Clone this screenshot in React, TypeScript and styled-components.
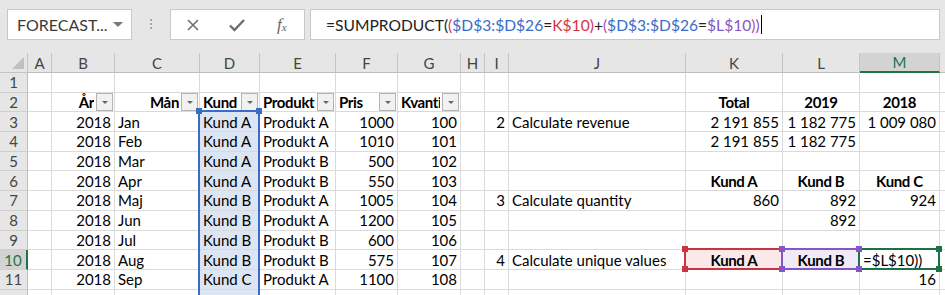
import React from 'react';
import styled, { createGlobalStyle, css } from 'styled-components';

type Ref = 'blue' | 'red' | 'purple' | 'green';
type Align = 'left' | 'right' | 'center';
type Corner = 'tl' | 'tr' | 'bl' | 'br';

type CellSpec = {
  v?: string,
  a?: Align,
  b?: boolean,
  filter?: boolean,
  hl?: Ref,
  sides?: string,
  handles?: Corner[],
}

const refColors: Record<Ref, { line: string, fill: string }> = {
  blue: { line: '#3a6cc6', fill: '#dbe5f4' },
  red: { line: '#c9353d', fill: '#fbe9ea' },
  purple: { line: '#8657c4', fill: '#efeaf7' },
  green: { line: '#1e7145', fill: '#ffffff' },
};

// last column is only a sliver at the right edge, so it has no letter
const COLS = ['A', 'B', 'C', 'D', 'E', 'F', 'G', 'H', 'I', 'J', 'K', 'L', 'M', ''];
const WIDTHS = [24, 63, 85, 60, 76, 62, 63, 24, 24, 177, 97, 77, 80, 60];
const VISIBLE_ROWS = 11;

const sales = [
  ['2018', 'Jan', 'Kund A', 'Produkt A', '1000', '100'],
  ['2018', 'Feb', 'Kund A', 'Produkt A', '1010', '101'],
  ['2018', 'Mar', 'Kund A', 'Produkt B', '500', '102'],
  ['2018', 'Apr', 'Kund A', 'Produkt B', '550', '103'],
  ['2018', 'Maj', 'Kund B', 'Produkt A', '1005', '104'],
  ['2018', 'Jun', 'Kund B', 'Produkt A', '1200', '105'],
  ['2018', 'Jul', 'Kund B', 'Produkt B', '600', '106'],
  ['2018', 'Aug', 'Kund B', 'Produkt B', '575', '107'],
  ['2018', 'Sep', 'Kund C', 'Produkt A', '1100', '108'],
];

const calc: Record<number, Record<string, CellSpec>> = {
  2: {
    K: { v: 'Total', a: 'center', b: true },
    L: { v: '2019', a: 'center', b: true },
    M: { v: '2018', a: 'center', b: true },
  },
  3: {
    I: { v: '2', a: 'right' },
    J: { v: 'Calculate revenue' },
    K: { v: '2 191 855', a: 'right' },
    L: { v: '1 182 775', a: 'right' },
    M: { v: '1 009 080', a: 'right' },
  },
  4: {
    K: { v: '2 191 855', a: 'right' },
    L: { v: '1 182 775', a: 'right' },
  },
  6: {
    K: { v: 'Kund A', a: 'center', b: true },
    L: { v: 'Kund B', a: 'center', b: true },
    M: { v: 'Kund C', a: 'center', b: true },
  },
  7: {
    I: { v: '3', a: 'right' },
    J: { v: 'Calculate quantity' },
    K: { v: '860', a: 'right' },
    L: { v: '892', a: 'right' },
    M: { v: '924', a: 'right' },
  },
  8: {
    L: { v: '892', a: 'right' },
  },
  10: {
    I: { v: '4', a: 'right' },
    J: { v: 'Calculate unique values' },
    K: { v: 'Kund A', a: 'center', b: true, hl: 'red', sides: 'tlbr', handles: ['tl', 'tr', 'bl', 'br'] },
    L: { v: 'Kund B', a: 'center', b: true, hl: 'purple', sides: 'tlbr', handles: ['tl', 'tr', 'bl', 'br'] },
    M: { v: '=$L$10))', hl: 'green', sides: 'tlbr', handles: ['tr', 'br'] },
  },
  11: {
    M: { v: '16', a: 'right' },
  },
};

const headers = ['År', 'Mån', 'Kund', 'Produkt', 'Pris', 'Kvanti'];
const headerAlign: Align[] = ['right', 'right', 'left', 'left', 'left', 'left'];
const numeric = [true, false, false, false, true, true];

function specFor(row: number, col: string): CellSpec {
  const i = COLS.indexOf(col) - 1;
  let spec: CellSpec = {};
  if (i >= 0 && i < 6) {
    if (row === 2) spec = { v: headers[i], a: headerAlign[i], b: true, filter: true };
    if (row >= 3 && row <= 11) spec = { v: sales[row - 3][i], a: numeric[i] ? 'right' : 'left' };
  }
  if (calc[row] && calc[row][col]) spec = calc[row][col];
  if (col === 'D' && row >= 3) {
    spec = { ...spec, hl: 'blue', sides: row === 3 ? 'tlr' : 'lr', handles: row === 3 ? ['tl', 'tr'] : [] };
  }
  return spec;
}

export default function App(): React.FunctionComponentElement<JSX.Element> {
  // one extra row peeks in under the bottom edge
  const rows = Array.from({ length: VISIBLE_ROWS + 1 }, (_, i) => i + 1);

  return (
    <Wrapper>
      <GlobalStyle />
      <FormulaBar>
        <NameBox>
          <span>{'FORECAST...'}</span>
          <Caret />
        </NameBox>
        <Grip><i /><i /><i /></Grip>
        <FxBox>
          <FxSlot>
            <svg width='14' height='14' viewBox='0 0 14 14'>
              <path d='M2 2 L12 12 M12 2 L2 12' stroke='#6e6e6e' strokeWidth='1.6' fill='none' />
            </svg>
          </FxSlot>
          <FxSlot>
            <svg width='18' height='14' viewBox='0 0 18 14'>
              <path d='M2 7.5 L6.5 12 L16 2' stroke='#6e6e6e' strokeWidth='2.4' fill='none' />
            </svg>
          </FxSlot>
          <FxSlot>
            <FxText>{'f'}<sub>{'x'}</sub></FxText>
          </FxSlot>
        </FxBox>
        <FormulaInput>
          <span>{'=SUMPRODUCT('}</span>
          <Tok $c='#d6336c'>{'('}</Tok>
          <Tok $c='#3a6cc6'>{'$D$3:$D$26'}</Tok>
          <span>{'='}</span>
          <Tok $c='#d9343c'>{'K$10'}</Tok>
          <Tok $c='#d6336c'>{')'}</Tok>
          <span>{'+'}</span>
          <Tok $c='#b04fb0'>{'('}</Tok>
          <Tok $c='#3a6cc6'>{'$D$3:$D$26'}</Tok>
          <span>{'='}</span>
          <Tok $c='#8657c4'>{'$L$10'}</Tok>
          <Tok $c='#b04fb0'>{')'}</Tok>
          <Tok $c='#8657c4'>{')'}</Tok>
          <Cursor />
        </FormulaInput>
      </FormulaBar>

      <Sheet>
        <CornerCell><Tri /></CornerCell>
        {COLS.map((c, i) => <ColHead key={i} $selected={c === 'M'}>{c}</ColHead>)}

        {rows.map(r => (
          <React.Fragment key={r}>
            <RowHead $selected={r === 10}>{r <= VISIBLE_ROWS ? r : ''}</RowHead>
            {COLS.map((c, ci) => {
              const s = specFor(r, c);
              const ref = s.hl ? refColors[s.hl] : null;
              return (
                <Cell key={ci} $bold={!!s.b} $fill={ref ? ref.fill : '#fff'} $filter={!!s.filter}>
                  <CellText $align={s.a || 'left'}>{s.v}</CellText>
                  {s.filter && <FilterBtn><Arrow /></FilterBtn>}
                  {ref && <Frame $c={ref.line} $sides={s.sides || ''} />}
                  {ref && (s.handles || []).map(h => <Handle key={h} $c={ref.line} $at={h} />)}
                </Cell>
              );
            })}
          </React.Fragment>
        ))}
      </Sheet>
    </Wrapper>
  )
}

// STYLES
const GlobalStyle = createGlobalStyle`
  html, body {
    margin: 0;
    padding: 0;
    background: #fff;
  }

  body {
    font-family: Lato, 'Liberation Sans', sans-serif;
  }
`

const Wrapper = styled.div`
  width: 945px;
  height: 295px;
  overflow: hidden;
  background: #fff;
`

const FormulaBar = styled.div`
  display: flex;
  align-items: flex-start;
  height: 53px;
  box-sizing: border-box;
  padding: 9px 0 0 7px;
  background: #e6e6e6;
`

const Box = css`
  box-sizing: border-box;
  height: 31px;
  background: #fff;
  border: 1px solid #c8c8c8;
  display: flex;
  align-items: center;
`

const NameBox = styled.div`
  ${Box};
  width: 125px;
  padding: 0 8px 0 9px;
  justify-content: space-between;
  font-size: 16px;
  color: #3a3a3a;
`

const Caret = styled.span`
  width: 0;
  height: 0;
  border-left: 5px solid transparent;
  border-right: 5px solid transparent;
  border-top: 5px solid #777;
`

const Grip = styled.div`
  width: 38px;
  display: flex;
  flex-direction: column;
  align-items: center;
  gap: 2px;
  padding-top: 10px;

  & > i {
    width: 2px;
    height: 2px;
    background: #a8a8a8;
  }
`

const FxBox = styled.div`
  ${Box};
  width: 135px;
`

const FxSlot = styled.div`
  width: 45px;
  display: flex;
  justify-content: center;
  align-items: center;
`

const FxText = styled.span`
  font-family: 'Liberation Serif', serif;
  font-style: italic;
  font-size: 17px;
  color: #666;

  & > sub {
    font-size: 11px;
    vertical-align: -1px;
  }
`

const FormulaInput = styled.div`
  ${Box};
  flex: 1;
  margin: 0 5px 0 5px;
  padding-left: 15px;
  font-size: 15.6px;
  color: #222;
  white-space: nowrap;
`

const Tok = styled.span<{ $c: string }>`
  color: ${p => p.$c};
`

const Cursor = styled.span`
  width: 1px;
  height: 19px;
  margin-left: 1px;
  background: #000;
`

const Sheet = styled.div`
  display: grid;
  grid-template-columns: 28px ${WIDTHS.map(w => `${w}px`).join(' ')};
  grid-template-rows: 20px;
  grid-auto-rows: 19.7px;
  font-size: 15px;
`

const HeadBase = css`
  box-sizing: border-box;
  display: flex;
  align-items: center;
  justify-content: center;
  background: #e6e6e6;
  color: #444;
  font-size: 15px;
`

const CornerCell = styled.div`
  ${HeadBase};
  position: relative;
  border-right: 1px solid #c4c4c4;
  border-bottom: 1px solid #c4c4c4;
`

const Tri = styled.span`
  position: absolute;
  right: 3px;
  bottom: 3px;
  width: 0;
  height: 0;
  border-left: 12px solid transparent;
  border-bottom: 12px solid #c0c0c0;
`

const ColHead = styled.div<{ $selected: boolean }>`
  ${HeadBase};
  border-right: 1px solid #c4c4c4;
  border-bottom: 1px solid #bdbdbd;

  ${p => p.$selected && css`
    background: #d3d3d3;
    color: #217346;
    border-bottom: 2px solid #217346;
  `}
`

const RowHead = styled.div<{ $selected: boolean }>`
  ${HeadBase};
  border-right: 1px solid #bdbdbd;
  border-bottom: 1px solid #cfcfcf;

  ${p => p.$selected && css`
    background: #d3d3d3;
    color: #217346;
    border-right: 2px solid #217346;
  `}
`

const Cell = styled.div<{ $bold: boolean, $fill: string, $filter: boolean }>`
  position: relative;
  box-sizing: border-box;
  display: flex;
  align-items: center;
  min-width: 0;
  padding: 0 ${p => (p.$filter ? '1px' : '3px')} 0 3px;
  background: ${p => p.$fill};
  border-right: 1px solid #dadada;
  border-bottom: 1px solid #dadada;
  font-weight: ${p => (p.$bold ? 700 : 400)};
  letter-spacing: ${p => (p.$bold ? '-0.35px' : '0')};
  color: #000;
  white-space: nowrap;
`

const CellText = styled.span<{ $align: Align }>`
  flex: 1;
  min-width: 0;
  overflow: hidden;
  text-align: ${p => p.$align};
`

const FilterBtn = styled.span`
  box-sizing: border-box;
  flex: none;
  width: 17px;
  height: 18px;
  margin-left: 2px;
  display: flex;
  align-items: center;
  justify-content: center;
  background: #f1f1f1;
  border: 1px solid #b4b4b4;
`

const Arrow = styled.span`
  width: 0;
  height: 0;
  border-left: 3px solid transparent;
  border-right: 3px solid transparent;
  border-top: 3px solid #666;
`

const Frame = styled.span<{ $c: string, $sides: string }>`
  position: absolute;
  z-index: 2;
  top: ${p => (p.$sides.includes('t') ? '-2px' : '-1px')};
  bottom: -1px;
  left: -2px;
  right: -1px;
  pointer-events: none;
  border: 0 solid ${p => p.$c};
  border-top-width: ${p => (p.$sides.includes('t') ? '2px' : '0')};
  border-bottom-width: ${p => (p.$sides.includes('b') ? '2px' : '0')};
  border-left-width: ${p => (p.$sides.includes('l') ? '2px' : '0')};
  border-right-width: ${p => (p.$sides.includes('r') ? '2px' : '0')};
`

const Handle = styled.span<{ $c: string, $at: Corner }>`
  position: absolute;
  z-index: 3;
  width: 6px;
  height: 6px;
  background: ${p => p.$c};
  ${p => (p.$at[0] === 't' ? 'top: -4px;' : 'bottom: -3px;')}
  ${p => (p.$at[1] === 'l' ? 'left: -4px;' : 'right: -3px;')}
`
